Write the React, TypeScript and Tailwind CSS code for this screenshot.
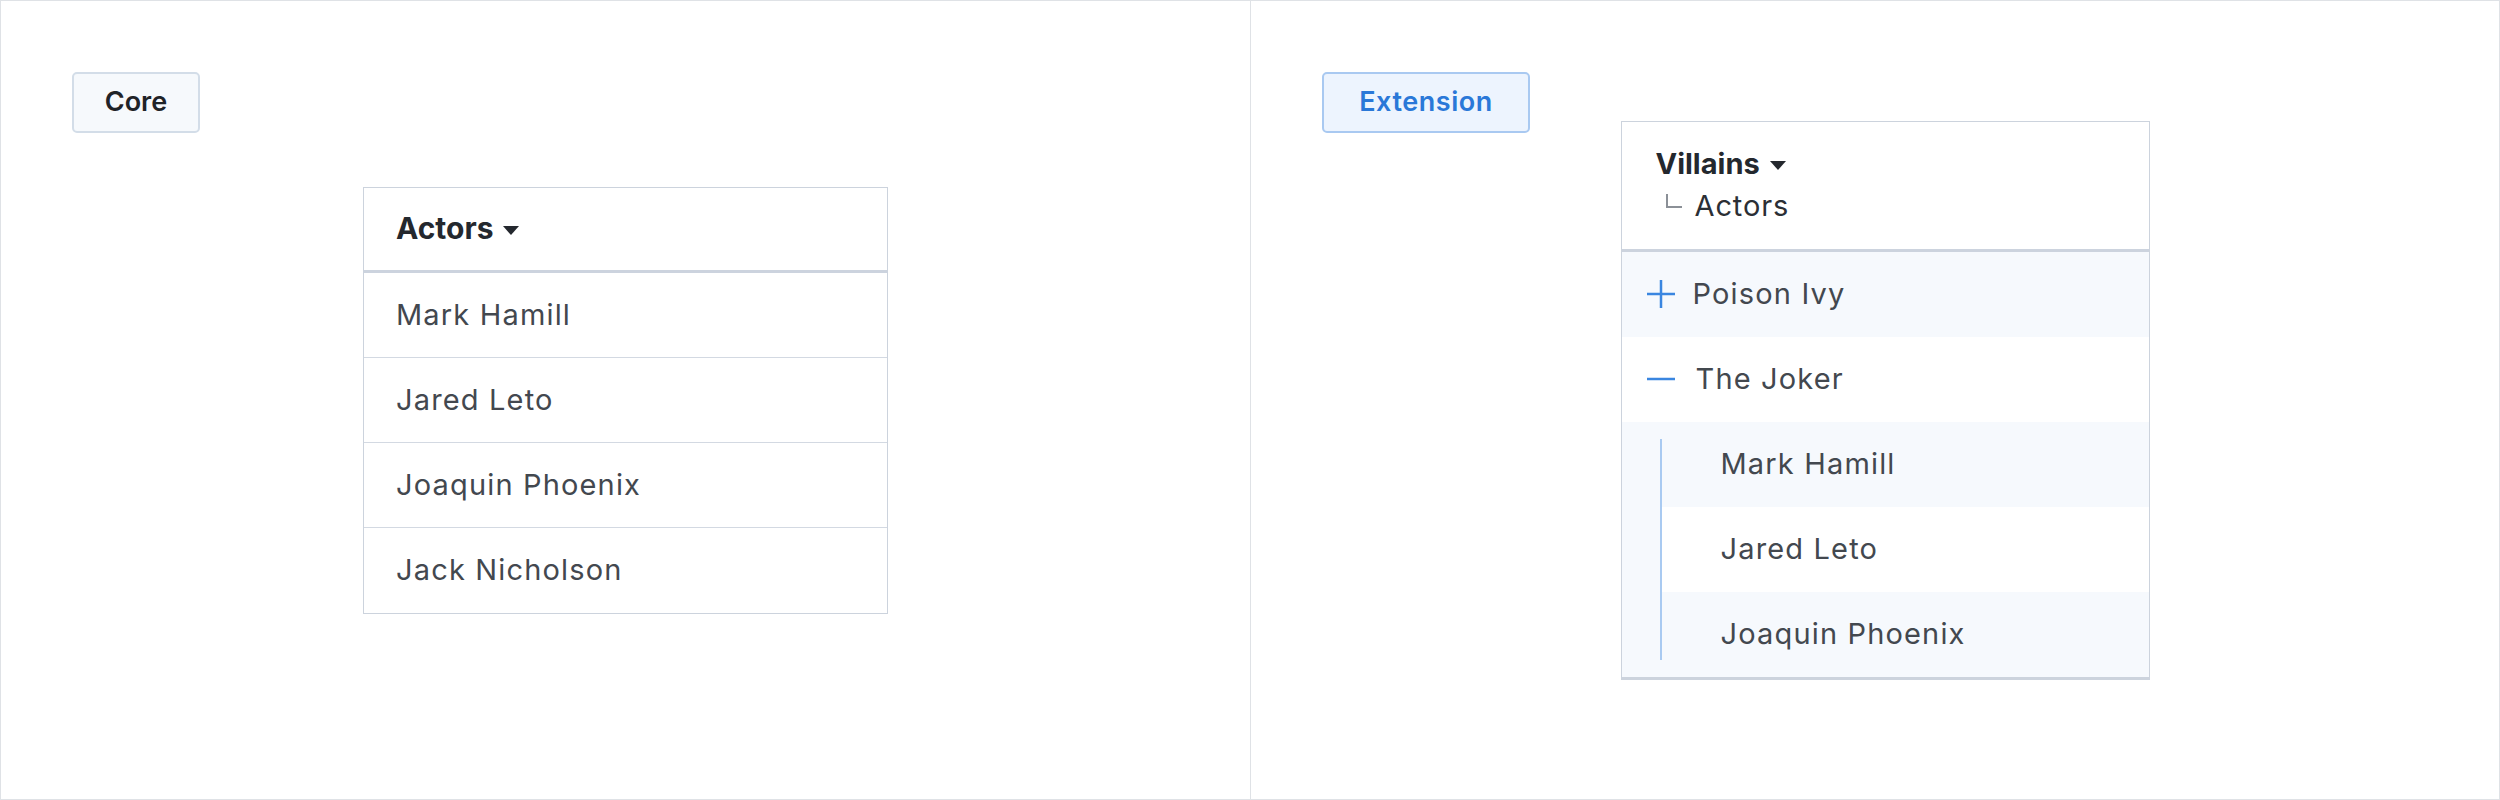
const coreActors = ['Mark Hamill', 'Jared Leto', 'Joaquin Phoenix', 'Jack Nicholson']
const jokerActors = ['Mark Hamill', 'Jared Leto', 'Joaquin Phoenix']

function Caret() {
  return (
    <svg width="16" height="9" viewBox="0 0 16 9" className="ml-[10px] mt-[3px] flex-none" aria-hidden="true">
      <path d="M0 0 H16 L8 9 Z" fill="#24282e" />
    </svg>
  )
}

function PlusIcon() {
  return (
    <svg width="28" height="28" viewBox="0 0 28 28" className="flex-none" aria-hidden="true">
      <path d="M0 14 H28 M14 0 V28" stroke="#3a86e0" strokeWidth="2.5" />
    </svg>
  )
}

function MinusIcon() {
  return (
    <svg width="28" height="28" viewBox="0 0 28 28" className="flex-none" aria-hidden="true">
      <path d="M0 14 H28" stroke="#3a86e0" strokeWidth="2.5" />
    </svg>
  )
}

function Tag({ label, active }: { label: string; active?: boolean }) {
  return (
    <div
      className={
        active
          ? 'col-start-1 row-start-1 ml-[71px] mt-[71px] flex h-[61px] w-[208px] items-center justify-center self-start justify-self-start rounded-[5px] border-2 border-[#a9c9f1] bg-[#edf4fe] text-[27px] font-semibold tracking-[0.02em] text-[#2a78d8]'
          : 'col-start-1 row-start-1 ml-[71px] mt-[71px] flex h-[61px] w-[128px] items-center justify-center self-start justify-self-start rounded-[5px] border-2 border-[#d3dde8] bg-[#f6f9fc] text-[27px] font-semibold text-[#1f2328]'
      }
    >
      {label}
    </div>
  )
}

export default function App() {
  return (
    <div className="flex h-[800px] w-[2500px] border border-[#dfe2e6] bg-white font-['Inter',sans-serif]">
      <section className="grid w-[1250px] grid-cols-1 grid-rows-1 border-r border-[#dfe2e6]">
        <Tag label="Core" />
        <div className="col-start-1 row-start-1 w-[525px] self-center justify-self-center border border-[#ccd3dd] bg-white">
          <div className="flex h-[85px] items-center border-b-[3px] border-[#ccd3de] pl-[32px]">
            <span className="text-[30px] font-bold text-[#24282e]">Actors</span>
            <Caret />
          </div>
          {coreActors.map((name, i) => (
            <div
              key={name}
              className={
                i < coreActors.length - 1
                  ? 'flex h-[85px] items-center border-b border-[#d3d9e2] pl-[32px] text-[29px] tracking-[0.04em] text-[#43484f]'
                  : 'flex h-[85px] items-center pl-[32px] text-[29px] tracking-[0.04em] text-[#43484f]'
              }
            >
              {name}
            </div>
          ))}
        </div>
      </section>

      <section className="grid flex-1 grid-cols-1 grid-rows-1">
        <Tag label="Extension" active />
        <div className="col-start-1 row-start-1 ml-[20px] w-[529px] self-center justify-self-center border border-b-[3px] border-[#ccd3dd] bg-white">
          <div className="flex h-[130px] flex-col justify-center border-b-[3px] border-[#ccd3de] pl-[34px]">
            <div className="flex items-center">
              <span className="text-[29px] font-bold leading-[38px] text-[#24282e]">Villains</span>
              <Caret />
            </div>
            <div className="mt-[4px] flex items-center">
              <span className="ml-[10px] mb-[10px] h-[14px] w-[16px] border-b-2 border-l-2 border-[#8b9097]" />
              <span className="ml-[13px] text-[29px] leading-[38px] tracking-[0.03em] text-[#2b2f35]">Actors</span>
            </div>
          </div>

          <div className="flex h-[85px] items-center gap-[18px] bg-[#f6f9fd] pl-[25px] text-[29px] tracking-[0.04em] text-[#43484f]">
            <PlusIcon />
            <span>Poison Ivy</span>
          </div>
          <div className="flex h-[85px] items-center gap-[21px] pl-[25px] text-[29px] tracking-[0.04em] text-[#43484f]">
            <MinusIcon />
            <span>The Joker</span>
          </div>

          <div className="flex">
            <div className="flex w-[40px] flex-none justify-end bg-[#f6f9fd]">
              <div className="my-[17px] w-[2px] bg-[#a9caf1]" />
            </div>
            <div className="flex flex-1 flex-col">
              {jokerActors.map((name, i) => (
                <div
                  key={name}
                  className={
                    i % 2 === 0
                      ? 'flex h-[85px] items-center bg-[#f6f9fd] pl-[59px] text-[29px] tracking-[0.04em] text-[#43484f]'
                      : 'flex h-[85px] items-center bg-white pl-[59px] text-[29px] tracking-[0.04em] text-[#43484f]'
                  }
                >
                  {name}
                </div>
              ))}
            </div>
          </div>
        </div>
      </section>
    </div>
  )
}
